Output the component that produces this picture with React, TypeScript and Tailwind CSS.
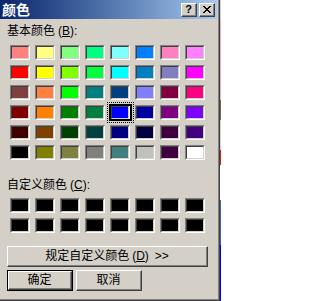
import React from 'react';

const BASIC_COLORS = [
  'bg-[#ff8080]', 'bg-[#ffff80]', 'bg-[#80ff80]', 'bg-[#00ff80]', 'bg-[#80ffff]', 'bg-[#0080ff]', 'bg-[#ff80c0]', 'bg-[#ff80ff]',
  'bg-[#ff0000]', 'bg-[#ffff00]', 'bg-[#80ff00]', 'bg-[#00ff40]', 'bg-[#00ffff]', 'bg-[#0080c0]', 'bg-[#8080c0]', 'bg-[#ff00ff]',
  'bg-[#804040]', 'bg-[#ff8040]', 'bg-[#00ff00]', 'bg-[#008080]', 'bg-[#004080]', 'bg-[#8080ff]', 'bg-[#800040]', 'bg-[#ff0080]',
  'bg-[#800000]', 'bg-[#ff8000]', 'bg-[#008000]', 'bg-[#008040]', 'bg-[#0000ff]', 'bg-[#0000a0]', 'bg-[#800080]', 'bg-[#8000ff]',
  'bg-[#400000]', 'bg-[#804000]', 'bg-[#004000]', 'bg-[#004040]', 'bg-[#000080]', 'bg-[#000040]', 'bg-[#400040]', 'bg-[#400080]',
  'bg-[#000000]', 'bg-[#808000]', 'bg-[#808040]', 'bg-[#808080]', 'bg-[#408080]', 'bg-[#c0c0c0]', 'bg-[#400040]', 'bg-[#ffffff]',
];

const SELECTED_INDEX = 28;

// the 1px sliver of whatever sits behind the dialog on the right
const BEHIND = [
  'h-[20px] bg-[#d0d0d0]',
  'h-[80px] bg-[#e8a8c8]',
  'h-[20px] bg-[#707040]',
  'h-[30px] bg-[#d8d0c8]',
  'h-[15px] bg-[#d02020]',
  'h-[35px] bg-[#ffffff]',
  'h-[45px] bg-[#4060c0]',
  'h-[56px] bg-[#0000ff]',
];

function Swatch({ color, selected }: { color: string; selected?: boolean }) {
  return (
    <div className="relative w-[20px] h-[15px] border border-t-[#808080] border-l-[#808080] border-b-white border-r-white">
      <div
        className={`w-full h-full border border-t-[#404040] border-l-[#404040] border-b-[#d4d0c8] border-r-[#d4d0c8] ${color}`}
      />
      {selected && (
        <>
          <div className="absolute left-[-2px] top-[-2px] w-[23px] h-[17px] border-2 border-black" />
          <div className="absolute left-[-4px] top-[-4px] w-[27px] h-[21px] border border-dotted border-black" />
        </>
      )}
    </div>
  );
}

function Raised({
  className,
  children,
}: {
  className?: string;
  children: React.ReactNode;
}) {
  return (
    <div
      className={`border border-t-white border-l-white border-b-[#404040] border-r-[#404040] bg-[#d4d0c8] ${className ?? ''}`}
    >
      <div className="w-full h-full flex items-center justify-center border-b border-r border-b-[#808080] border-r-[#808080]">
        {children}
      </div>
    </div>
  );
}

export default function App() {
  return (
    <div className="w-[221px] h-[301px] flex bg-white font-['Liberation_Sans','Noto_Sans_CJK_SC',sans-serif] text-black select-none">
      <div className="w-[220px] h-[301px] border-r border-b border-r-[#404040] border-b-[#404040] bg-[#d4d0c8]">
        <div className="w-full h-full flex flex-col border-r border-b border-r-[#808080] border-b-[#808080] pr-[1px]">
          {/* title bar */}
          <div className="h-[19px] shrink-0 flex items-start bg-linear-to-r from-[#0a246a] to-[#a6caf0] pt-[3px] pr-[2px]">
            <div className="pl-[2px] mt-[-3px] h-[19px] leading-[19px] text-[14px] font-bold text-white font-['Noto_Sans_CJK_SC',sans-serif]">
              颜色
            </div>
            <div className="ml-auto flex gap-[2px]">
              <Raised className="w-[16px] h-[14px]">
                <span className="text-[11px] leading-none font-bold font-['Liberation_Sans',sans-serif]">?</span>
              </Raised>
              <Raised className="w-[16px] h-[14px]">
                <svg width="8" height="7" viewBox="0 0 8 7" shapeRendering="crispEdges">
                  <path
                    d="M0 0h2v1h-2zM6 0h2v1h-2zM1 1h2v1h-2zM5 1h2v1h-2zM2 2h4v1h-4zM3 3h2v1h-2zM2 4h4v1h-4zM1 5h2v1h-2zM5 5h2v1h-2zM0 6h2v1h-2zM6 6h2v1h-2z"
                    fill="#000"
                  />
                </svg>
              </Raised>
            </div>
          </div>

          {/* basic colours */}
          <div className="mt-[6px] h-[13px] leading-[13px] pl-[7px] text-[12px]">
            基本颜色<span className="ml-[3px]">(<span className="underline">B</span>):</span>
          </div>
          <div className="mt-[7px] pl-[10px] grid grid-cols-[repeat(8,20px)] gap-x-[5px] gap-y-[5px]">
            {BASIC_COLORS.map((color, i) => (
              <Swatch key={i} color={color} selected={i === SELECTED_INDEX} />
            ))}
          </div>

          {/* custom colours */}
          <div className="mt-[19px] h-[13px] leading-[13px] pl-[7px] text-[12px]">
            自定义颜色<span className="ml-[3px]">(<span className="underline">C</span>):</span>
          </div>
          <div className="mt-[6px] pl-[10px] grid grid-cols-[repeat(8,20px)] gap-x-[5px] gap-y-[5px]">
            {Array.from({ length: 16 }).map((_, i) => (
              <Swatch key={i} color="bg-black" />
            ))}
          </div>

          <Raised className="mt-[13px] ml-[7px] w-[201px] h-[21px] shrink-0">
            <span className="text-[12px] leading-none">
              规定自定义颜色<span className="ml-[3px]">(<span className="underline">D</span>)</span>
              <span className="ml-[6px]">&gt;&gt;</span>
            </span>
          </Raised>

          <div className="mt-[3px] ml-[7px] flex gap-[3px]">
            <div className="w-[66px] h-[21px] border border-black">
              <Raised className="w-full h-full">
                <span className="text-[12px] leading-none">确定</span>
              </Raised>
            </div>
            <Raised className="w-[66px] h-[21px]">
              <span className="text-[12px] leading-none">取消</span>
            </Raised>
          </div>
        </div>
      </div>
      <div className="w-[1px] flex flex-col">
        {BEHIND.map((seg, i) => (
          <div key={i} className={seg} />
        ))}
      </div>
    </div>
  );
}
